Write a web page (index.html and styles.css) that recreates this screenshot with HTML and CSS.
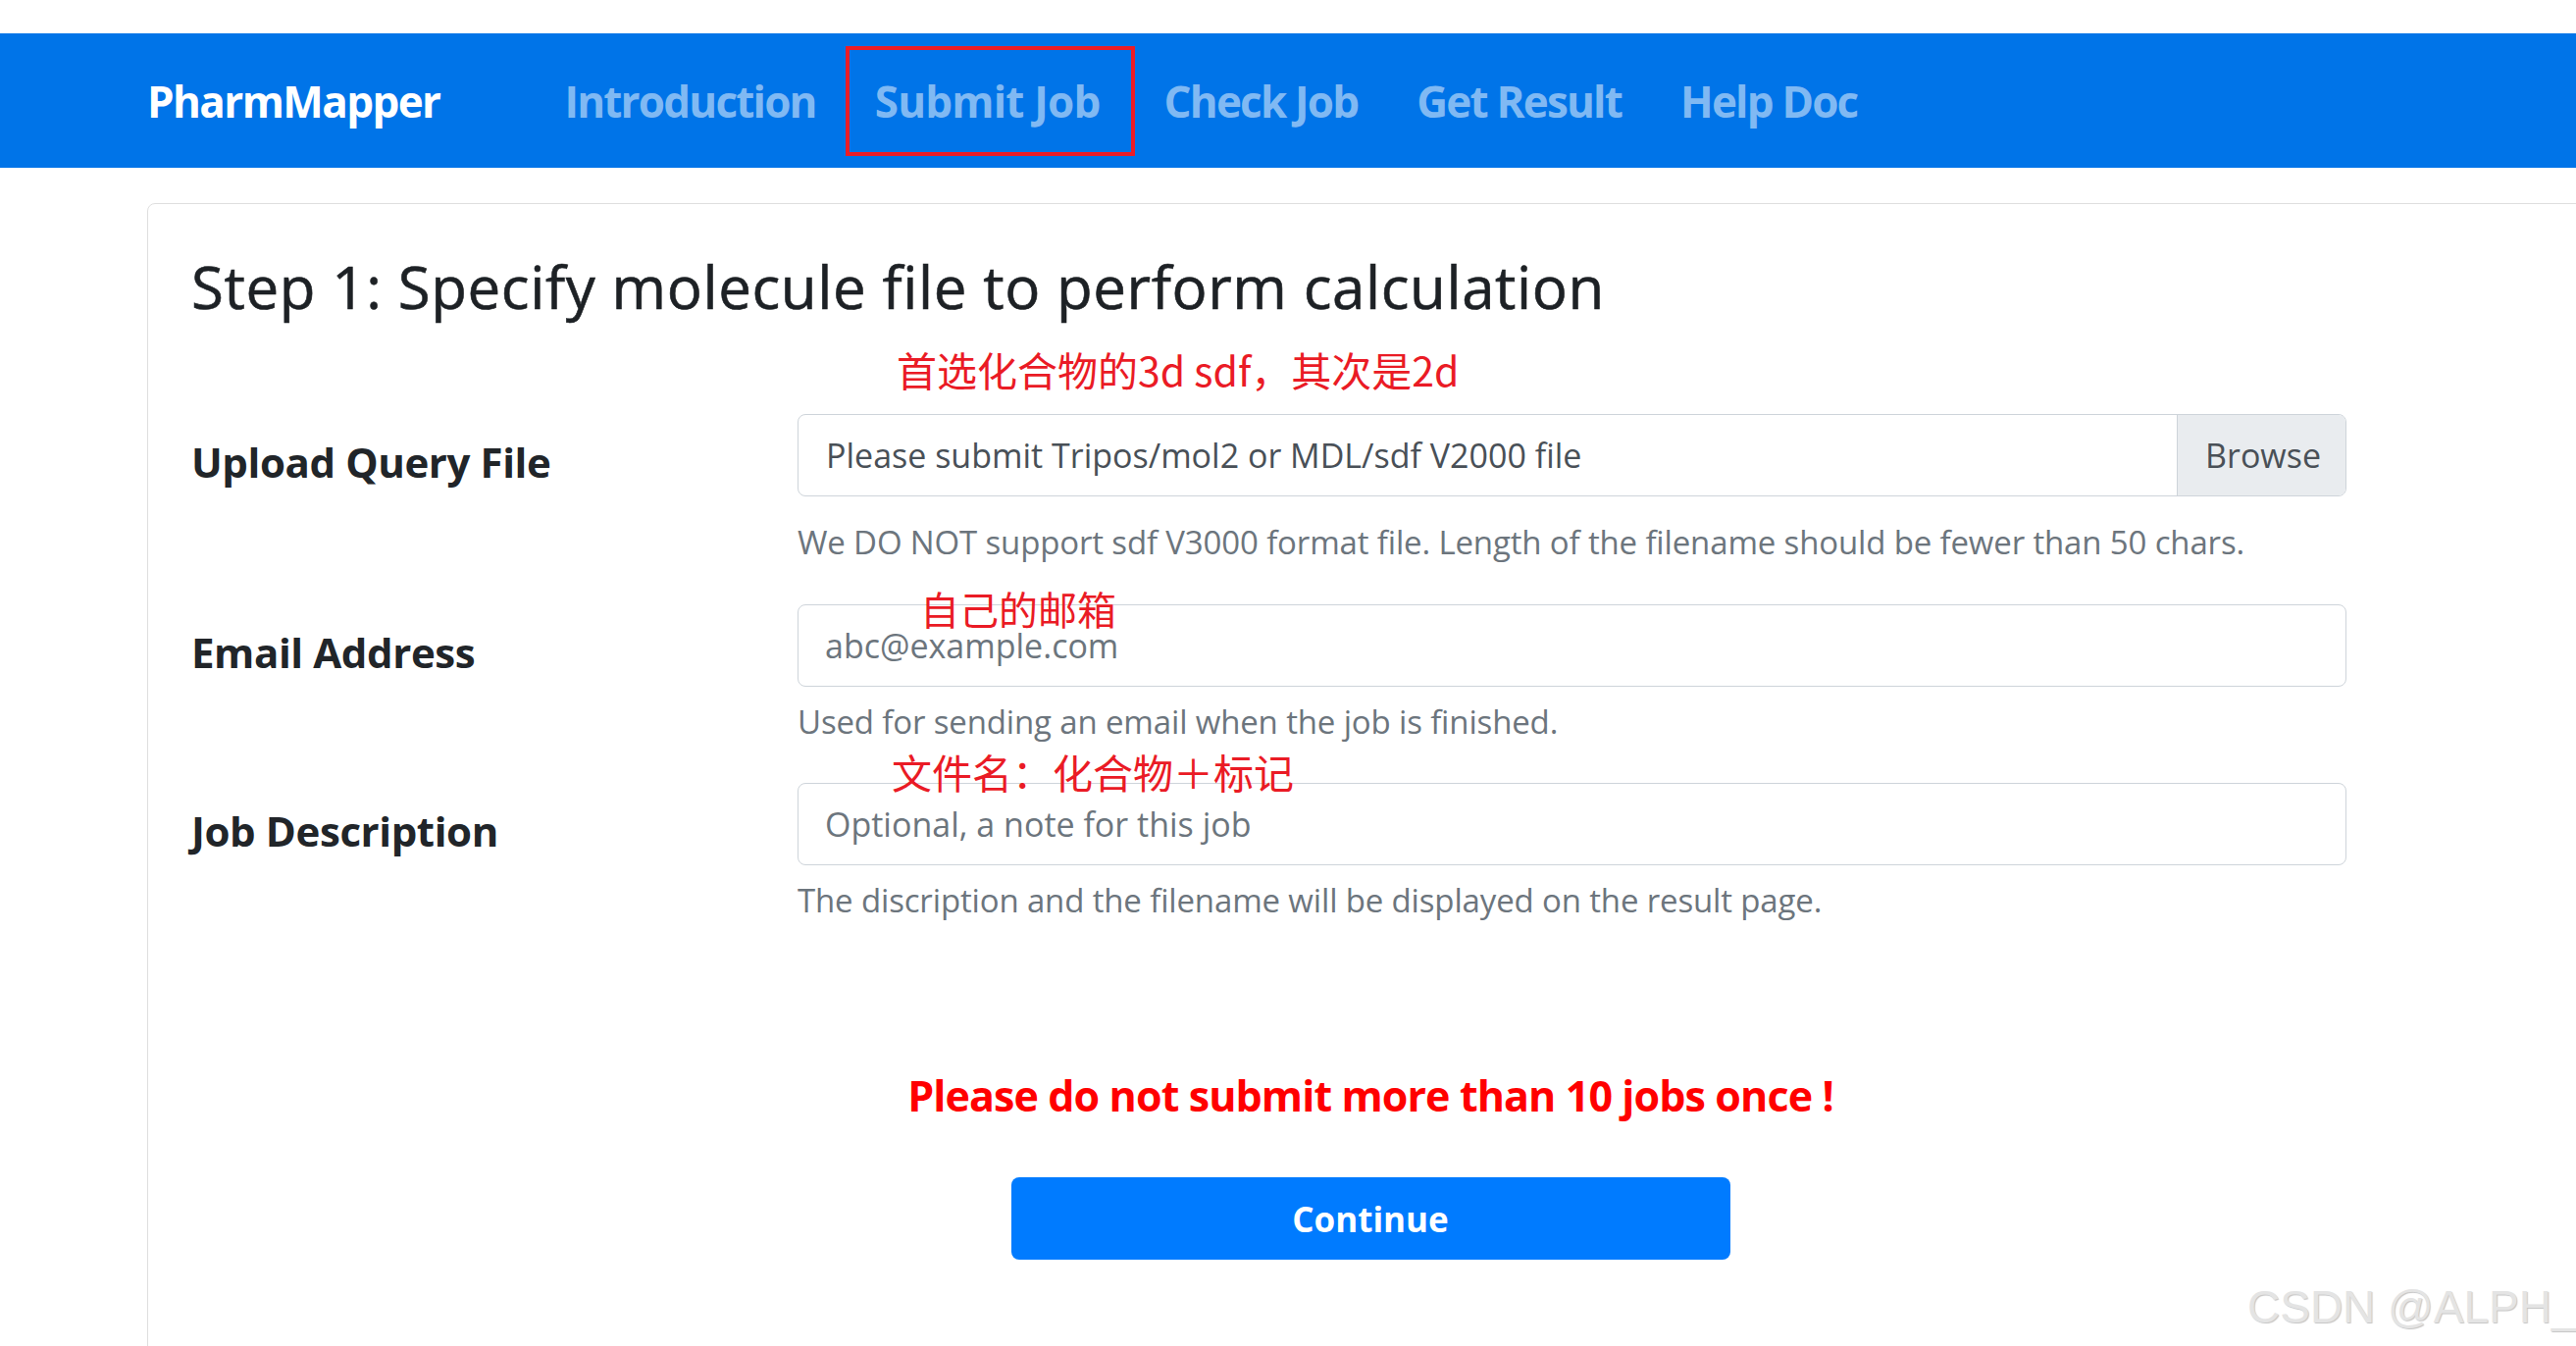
FILE: index.html
```html
<!DOCTYPE html>
<html lang="en">
<head>
<meta charset="utf-8">
<title>PharmMapper - Submit Job</title>
<link rel="stylesheet" href="styles.css">
</head>
<body>
<div class="topstrip"></div>
<nav class="navbar">
  <a class="brand" href="#">PharmMapper</a>
  <ul class="nav-links">
    <li><a class="nav-link" href="#">Introduction</a></li>
    <li><a class="nav-link active" href="#">Submit Job</a></li>
    <li><a class="nav-link" href="#">Check Job</a></li>
    <li><a class="nav-link" href="#">Get Result</a></li>
    <li><a class="nav-link" href="#">Help Doc</a></li>
  </ul>
</nav>
<main class="card">
  <h3 class="title">Step 1: Specify molecule file to perform calculation</h3>
  <form class="form">
    <div class="row">
      <label class="row-label">Upload Query File</label>
      <div class="field">
        <span class="note note-1">首选化合物的3d sdf，其次是2d</span>
        <div class="file-input">
          <span class="file-text">Please submit Tripos/mol2 or MDL/sdf V2000 file</span>
          <span class="browse">Browse</span>
        </div>
        <p class="help help-wide">We DO NOT support sdf V3000 format file. Length of the filename should be fewer than 50 chars.</p>
      </div>
    </div>
    <div class="row">
      <label class="row-label">Email Address</label>
      <div class="field">
        <input class="text-input" type="email" placeholder="abc@example.com">
        <span class="note note-2">自己的邮箱</span>
        <p class="help">Used for sending an email when the job is finished.</p>
      </div>
    </div>
    <div class="row">
      <label class="row-label">Job Description</label>
      <div class="field">
        <input class="text-input" type="text" placeholder="Optional, a note for this job">
        <span class="note note-3">文件名：化合物＋标记</span>
        <p class="help">The discription and the filename will be displayed on the result page.</p>
      </div>
    </div>
  </form>
  <p class="warning">Please do not submit more than 10 jobs once !</p>
  <button class="btn" type="button">Continue</button>
</main>
<div class="watermark">CSDN @ALPH_</div>
</body>
</html>
```
FILE: styles.css
```css
html, body {
  margin: 0;
  padding: 0;
}
body {
  position: relative;
  width: 2626px;
  height: 1372px;
  overflow: hidden;
  background: #ffffff;
  font-family: "Open Sans", "Noto Sans", sans-serif;
  color: #212529;
}
.topstrip {
  height: 34px;
  background: #ffffff;
}
.navbar {
  display: flex;
  align-items: center;
  height: 137px;
  padding-left: 150px;
  background: #0074e8;
}
.brand {
  font-size: 44px;
  font-weight: 700;
  color: #ffffff;
  text-decoration: none;
  margin-right: 97px;
  letter-spacing: -1.6px;
}
.nav-links {
  display: flex;
  list-style: none;
  margin: 0;
  padding: 0;
}
.nav-link {
  display: flex;
  align-items: center;
  box-sizing: border-box;
  height: 112px;
  padding: 0 26px;
  border: 4px solid transparent;
  font-size: 44px;
  font-weight: 700;
  color: #80b9f3;
  text-decoration: none;
  letter-spacing: -1.8px;
}
.nav-link.active {
  padding: 0 31px 0 26px;
  border-color: #ec1c26;
  letter-spacing: -0.8px;
}
.card {
  box-sizing: border-box;
  width: 2494px;
  height: 1300px;
  margin: 36px 0 0 150px;
  padding: 48px 44px;
  border: 1px solid #dfdfdf;
  border-radius: 8px;
}
.title {
  margin: 0;
  font-size: 60px;
  font-weight: 500;
  line-height: 1.2;
  letter-spacing: 0.6px;
  color: #1d2125;
  -webkit-text-stroke: 0.6px #1d2125;
}
.form {
  margin-top: 94px;
}
.row {
  display: grid;
  grid-template-columns: 618px 1579px;
  margin-bottom: 38px;
}
.row-label {
  padding-top: 17px;
  font-size: 42px;
  font-weight: 700;
  line-height: 1.5;
  letter-spacing: -0.4px;
  color: #212529;
}
.field {
  position: relative;
}
.file-input {
  display: flex;
  box-sizing: border-box;
  height: 84px;
  border: 1px solid #ced4da;
  border-radius: 8px;
  overflow: hidden;
}
.file-text {
  flex: 1;
  display: flex;
  align-items: center;
  padding-left: 28px;
  font-size: 34px;
  color: #495057;
}
.browse {
  display: flex;
  align-items: center;
  padding: 0 25px 0 28px;
  background: #e9ecef;
  border-left: 1px solid #ced4da;
  font-size: 34px;
  color: #495057;
}
.text-input {
  display: block;
  box-sizing: border-box;
  width: 100%;
  height: 84px;
  margin: 0;
  padding: 0 27px;
  border: 1px solid #ced4da;
  border-radius: 8px;
  font-family: "Open Sans", "Noto Sans", sans-serif;
  font-size: 34px;
  color: #495057;
  background: #ffffff;
  outline: none;
}
.text-input::placeholder {
  color: #6c757d;
  opacity: 1;
}
.help {
  margin: 11px 0 0;
  font-size: 33px;
  line-height: 1.5;
  letter-spacing: -0.15px;
  color: #6c757d;
}
.help-wide {
  margin-top: 22px;
}
.note {
  position: absolute;
  font-family: "Noto Sans CJK SC", "Open Sans", sans-serif;
  font-size: 41px;
  line-height: 1;
  color: #ea1b25;
  white-space: nowrap;
}
.note-1 {
  left: 101px;
  top: -66px;
}
.note-2 {
  left: 125px;
  top: -16px;
  font-size: 40px;
}
.note-3 {
  left: 96px;
  top: -32px;
}
.warning {
  margin: 142px 0 0;
  text-align: center;
  font-size: 43px;
  font-weight: 700;
  line-height: 1.5;
  letter-spacing: -0.9px;
  color: #ff0000;
}
.btn {
  display: block;
  width: 733px;
  height: 84px;
  margin: 51px auto 0;
  border: none;
  border-radius: 8px;
  background: #007bff;
  color: #ffffff;
  font-family: "Open Sans", "Noto Sans", sans-serif;
  font-size: 35px;
  font-weight: 700;
}
.watermark {
  position: absolute;
  left: 2291px;
  top: 1309px;
  font-family: "Liberation Sans", Arial, sans-serif;
  font-size: 46px;
  line-height: 46px;
  color: #e4e4e4;
  text-shadow: 1px 1px 1px #c4c4c4;
  white-space: nowrap;
}
```
